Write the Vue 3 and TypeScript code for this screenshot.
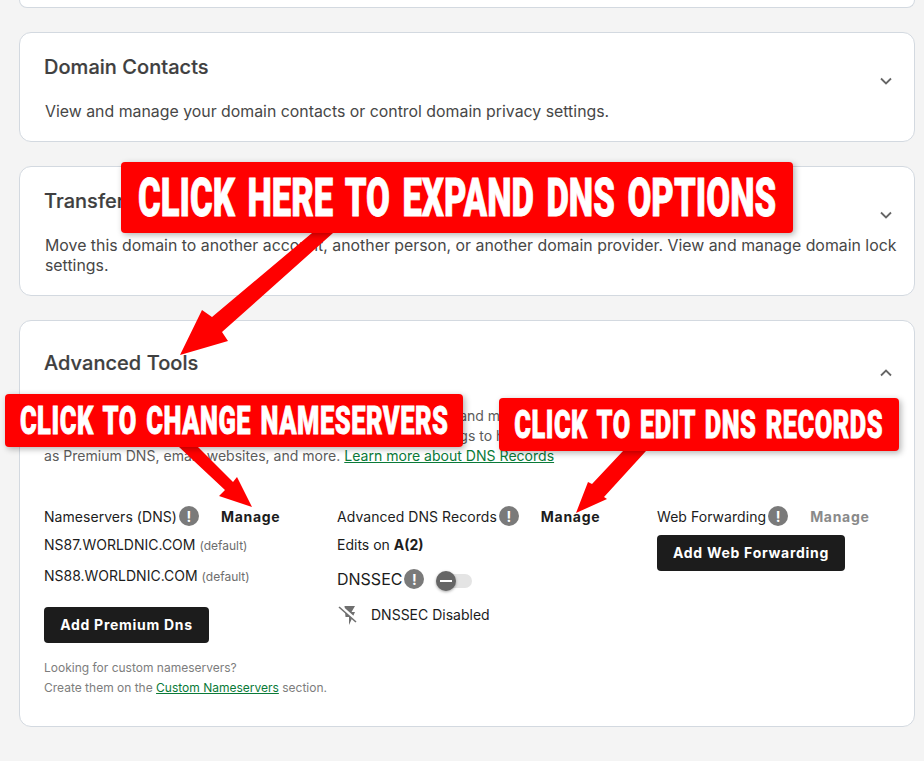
<script setup lang="ts">
interface Ns { host: string }
const nameservers: Ns[] = [{ host: 'NS87.WORLDNIC.COM' }, { host: 'NS88.WORLDNIC.COM' }]
</script>

<template>
  <div class="page">
    <div class="stub"></div>

    <section class="card">
      <header class="head">
        <h2>Domain Contacts</h2>
        <svg class="chev" viewBox="0 0 12 8"><path d="M1 1.5 6 6.5 11 1.5" /></svg>
      </header>
      <p class="desc inset">View and manage your domain contacts or control domain privacy settings.</p>
    </section>

    <section class="card">
      <header class="head">
        <h2>Transfer</h2>
        <svg class="chev" viewBox="0 0 12 8"><path d="M1 1.5 6 6.5 11 1.5" /></svg>
      </header>
      <p class="desc inset">Move this domain to another account, another person, or another domain provider. View and manage domain lock settings.</p>
    </section>

    <section class="card adv">
      <header class="head">
        <h2>Advanced Tools</h2>
        <svg class="chev up" viewBox="0 0 12 8"><path d="M1 6.5 6 1.5 11 6.5" /></svg>
      </header>
      <p class="desc">The Nameservers and DNS Records let you point your domain and manage<br />where it goes. Use all the options below to change these settings to host<br />as Premium DNS, email, websites, and more. <a href="#">Learn more about DNS Records</a></p>

      <div class="cols">
        <div class="col c1">
          <div class="label"><span>Nameservers (DNS)</span><i class="info">!</i><b class="manage">Manage</b></div>
          <div v-for="n in nameservers" :key="n.host" class="ns">{{ n.host }} <small>(default)</small></div>
          <button class="btn prem">Add Premium Dns</button>
          <p class="hint">Looking for custom nameservers?<br />Create them on the <a href="#">Custom Nameservers</a> section.</p>
        </div>
        <div class="col c2">
          <div class="label"><span>Advanced DNS Records</span><i class="info">!</i><b class="manage">Manage</b></div>
          <div class="edits">Edits on <b>A(2)</b></div>
          <div class="sec">
            <span>DNSSEC</span><i class="info">!</i>
            <span class="toggle"><span class="knob"></span></span>
          </div>
          <div class="off">
            <svg viewBox="0 0 21 21" class="bolt">
              <path d="M7.5 2H18L14.5 8H18L12 21V13H8.5L7.5 2Z" fill="#6f6f6f" />
              <path d="M3 2 20 17" stroke="#fff" stroke-width="3.2" />
              <path d="M2 3 19 18" stroke="#6f6f6f" stroke-width="1.6" />
            </svg>
            <span>DNSSEC Disabled</span>
          </div>
        </div>
        <div class="col c3">
          <div class="label"><span>Web Forwarding</span><i class="info">!</i><b class="manage muted">Manage</b></div>
          <button class="btn web">Add Web Forwarding</button>
        </div>
      </div>
    </section>

    <svg class="arrows" viewBox="0 0 924 761" width="924" height="761">
      <path d="M312 233H333L222 332 228 341 180 355 202 310 212 317Z" />
      <path d="M179 447H198L233 482 237 477 252 507 219 496 225 490Z" />
      <path d="M623 451H646L604 497 607 499 576 513 588 482 592 484Z" />
    </svg>

    <div class="call one"><span>CLICK HERE TO EXPAND DNS OPTIONS</span></div>
    <div class="call two"><span>CLICK TO CHANGE NAMESERVERS</span></div>
    <div class="call three"><span>CLICK TO EDIT DNS RECORDS</span></div>
  </div>
</template>

<style>
html, body { margin: 0; background: #f4f4f4; }
</style>

<style scoped>
.page {
  position: relative;
  width: 924px;
  height: 761px;
  overflow: hidden;
  box-sizing: border-box;
  padding-left: 19px;
  background: #f4f4f4;
  font-family: Inter, "Liberation Sans", sans-serif;
  color: #1c1c1c;
}
.stub, .card {
  width: 896px;
  box-sizing: border-box;
  background: #fff;
  border: 1px solid #d3d9e0;
  border-radius: 12px;
}
.stub { height: 8px; border-top: 0; border-radius: 0 0 12px 12px; margin-bottom: 24px; }
.card { padding: 19px 24px 19px; margin-bottom: 24px; }
.head { display: flex; justify-content: space-between; height: 30px; margin-bottom: 20px; }
h2 { margin: 0; font-size: 20px; line-height: 30px; font-weight: 500; color: #3f3f3f; -webkit-text-stroke: 0.2px #3f3f3f; letter-spacing: 0.04px; }
.chev { width: 12px; height: 8px; margin: 25px -2px 0 0; fill: none; stroke: #666; stroke-width: 1.8; }
.chev.up { margin-top: 21px; }
.desc { margin: 0 -8px 0 0; font-size: 15.86px; line-height: 20px; color: #474747; }
.desc.inset { margin-left: 1px; }
.adv { height: 407px; padding-top: 27px; }
.adv .head { margin-bottom: 28px; }
.adv .desc { font-size: 14.05px; color: #5c5c5c; }
a { color: #0a7a38; text-decoration: underline; }
.cols { display: flex; margin-top: 38px; font-size: 14px; }
.c1 { width: 293px; }
.c2 { width: 320px; }
.label { display: flex; align-items: center; height: 24px; }
.label span { letter-spacing: 0.05px; }
.info {
  display: inline-flex; align-items: center; justify-content: center;
  width: 20px; height: 20px; margin-left: 2px; border-radius: 50%;
  background: #7a7a7a; color: #fff; font-style: normal; font-weight: 700; font-size: 14px;
}
.manage { margin-left: 22px; font-weight: 700; letter-spacing: 0.7px; }
.manage.muted { color: #8a8a8a; }
.ns { height: 31px; line-height: 31px; }
.label + .ns { margin-top: 1px; }
small { font-size: 12px; color: #6d6d6d; }
.btn {
  display: block; height: 36px; border: 0; border-radius: 4px; background: #1c1c1c; color: #fff;
  font: 700 14px Inter, "Liberation Sans", sans-serif; letter-spacing: 0.72px; padding: 0 0 2px;
}
.prem { width: 165px; margin-top: 16px; }
.web { width: 188px; margin-top: 7px; }
.hint { margin: 15px 0 0; font-size: 12px; line-height: 20px; color: #7d7d7d; }
.edits { height: 24px; line-height: 24px; margin-top: 5px; }
.sec { display: flex; align-items: center; height: 24px; margin-top: 10px; font-size: 16px; }
.toggle { position: relative; width: 36px; height: 14px; margin-left: 12px; margin-top: 3px; background: #e4e4e4; border-radius: 7px; }
.knob {
  position: absolute; left: 0; top: -3px; width: 20px; height: 20px; border-radius: 50%; background: #666;
  box-shadow: 0 1px 3px rgba(0, 0, 0, .35);
}
.knob::after { content: ""; position: absolute; left: 4px; top: 9px; width: 12px; height: 2px; background: #fff; }
.off { display: flex; align-items: center; margin-top: 13px; gap: 13px; }
.bolt { width: 21px; height: 21px; }
.arrows { position: absolute; left: 0; top: 0; fill: #f00; }
.call {
  position: absolute; display: flex; align-items: center; justify-content: center; box-sizing: border-box;
  background: #f00; border-radius: 4px; box-shadow: 2px 2px 6px rgba(0, 0, 0, .3); color: #fff;
  font-family: Roboto, "Liberation Sans", sans-serif; font-weight: 900; white-space: nowrap;
  overflow: hidden;
}
.call span { display: inline-block; -webkit-text-stroke: 0.8px #fff; }
.one { left: 121px; top: 162px; width: 672px; height: 71px; font-size: 54px; }
.one span { transform: scaleX(0.642); word-spacing: 6px; }
.two { left: 5px; top: 394px; width: 458px; height: 53px; font-size: 39px; }
.two span { transform: scaleX(0.653); word-spacing: 4px; letter-spacing: 0.8px; }
.three { left: 499px; top: 398px; width: 400px; height: 53px; font-size: 39px; }
.three span { transform: scaleX(0.65); word-spacing: 4px; letter-spacing: 0.8px; }
</style>
